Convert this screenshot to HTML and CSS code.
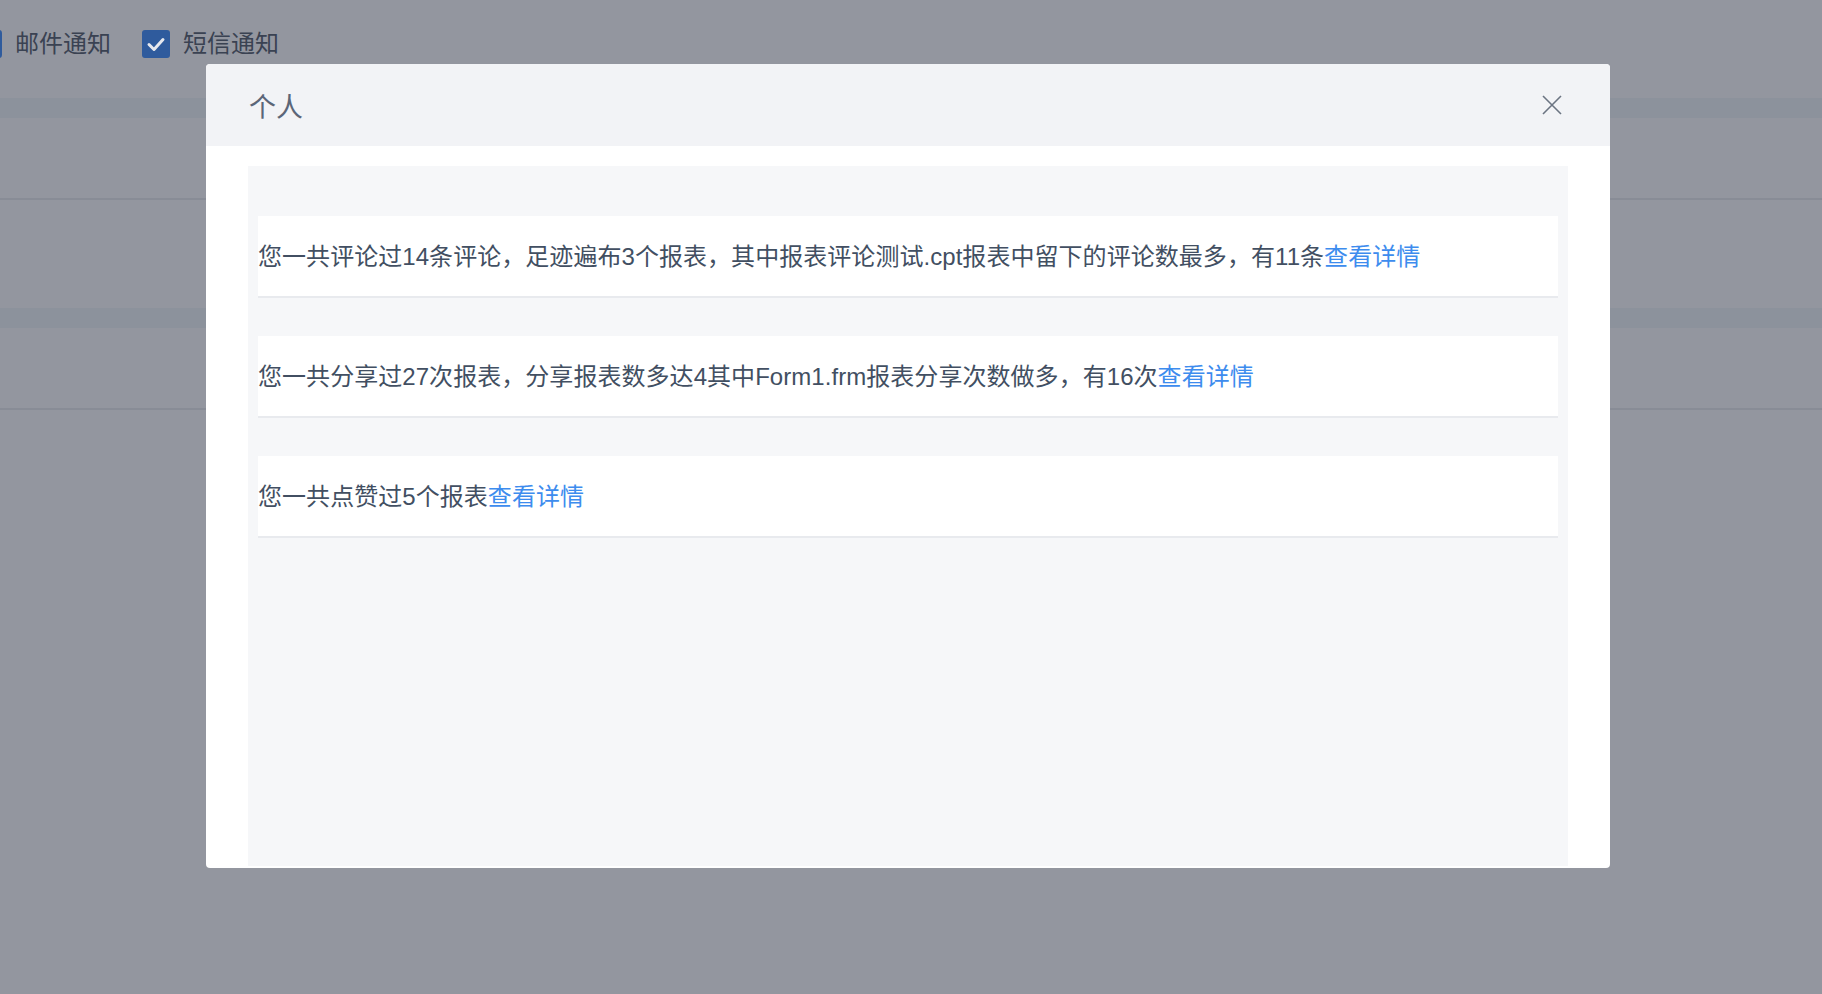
FILE: index.html
```html
<!DOCTYPE html>
<html lang="zh-CN">
<head>
<meta charset="utf-8">
<title>个人</title>
<link rel="stylesheet" href="styles.css">
</head>
<body>
<div class="page">
  <div class="toolbar">
    <label class="opt first">
      <span class="box"><svg viewBox="0 0 28 28" width="28" height="28"><path d="M7 14.5l5 5 9-10" fill="none" stroke="#e6e8ee" stroke-width="3" stroke-linecap="round" stroke-linejoin="round"/></svg></span>
      <span class="opt-text">邮件通知</span>
    </label>
    <label class="opt">
      <span class="box"><svg viewBox="0 0 28 28" width="28" height="28"><path d="M7 14.5l5 5 9-10" fill="none" stroke="#e6e8ee" stroke-width="3" stroke-linecap="round" stroke-linejoin="round"/></svg></span>
      <span class="opt-text">短信通知</span>
    </label>
  </div>
  <div class="band"></div>
  <div class="row"></div>
  <div class="row tall"></div>
  <div class="band"></div>
  <div class="row"></div>
</div>

<div class="modal">
  <div class="modal-header">
    <span class="modal-title">个人</span>
    <button class="close" aria-label="关闭">
      <svg viewBox="0 0 20 20" width="20" height="20"><path d="M1 1L19 19M19 1L1 19" stroke="#6b7482" stroke-width="1.6" fill="none"/></svg>
    </button>
  </div>
  <div class="modal-body">
    <div class="panel">
      <div class="card">您一共评论过14条评论，足迹遍布3个报表，其中报表评论测试.cpt报表中留下的评论数最多，有11条<a class="link" href="#">查看详情</a></div>
      <div class="card">您一共分享过27次报表，分享报表数多达4其中Form1.frm报表分享次数做多，有16次<a class="link" href="#">查看详情</a></div>
      <div class="card">您一共点赞过5个报表<a class="link" href="#">查看详情</a></div>
    </div>
  </div>
</div>
</body>
</html>
```

FILE: styles.css
```css
html, body {
  margin: 0;
  padding: 0;
  height: 100%;
}

body {
  background: #93969f;
  font-family: "Liberation Sans", "Noto Sans CJK SC", sans-serif;
  overflow: hidden;
}

.page {
  display: flex;
  flex-direction: column;
}

.toolbar {
  height: 98px;
  box-sizing: border-box;
  padding-top: 30px;
  display: flex;
  align-items: flex-start;
  margin-left: -26px;
}

.opt {
  display: flex;
  align-items: center;
  gap: 13px;
  height: 28px;
  margin-right: 31px;
}

.box {
  width: 28px;
  height: 28px;
  border-radius: 3px;
  background: #2f5b9d;
  display: flex;
}

.opt-text {
  font-size: 24px;
  color: #3a4252;
  line-height: 28px;
}

.band {
  height: 20px;
  background: #8c929c;
}

.row {
  height: 80px;
  border-bottom: 2px solid #888c96;
}

.row.tall {
  height: 108px;
  border-bottom: none;
}

.modal {
  position: fixed;
  left: 206px;
  top: 64px;
  width: 1404px;
  height: 804px;
  background: #ffffff;
  border-radius: 4px;
  overflow: hidden;
  display: flex;
  flex-direction: column;
}

.modal-header {
  height: 82px;
  flex: none;
  background: #f2f3f6;
  display: flex;
  align-items: center;
  justify-content: space-between;
  padding: 0 48px 0 43px;
}

.modal-title {
  font-size: 27px;
  color: #5b6678;
  font-family: "Noto Sans CJK SC", sans-serif;
}

.close {
  border: none;
  background: transparent;
  padding: 0;
  width: 20px;
  height: 20px;
  display: flex;
  cursor: pointer;
}

.modal-body {
  flex: 1;
  padding: 20px 42px 2px;
  display: flex;
  min-height: 0;
}

.panel {
  flex: 1;
  background: #f6f7f9;
  padding: 50px 10px 0;
  display: flex;
  flex-direction: column;
  gap: 38px;
}

.card {
  height: 82px;
  box-sizing: border-box;
  padding-bottom: 4px;
  flex: none;
  background: #ffffff;
  border-bottom: 2px solid #e8eaee;
  display: flex;
  align-items: center;
  font-size: 24px;
  color: #424f62;
  white-space: nowrap;
  letter-spacing: 0.05px;
}

.link {
  color: #3d8cee;
  text-decoration: none;
}
```
